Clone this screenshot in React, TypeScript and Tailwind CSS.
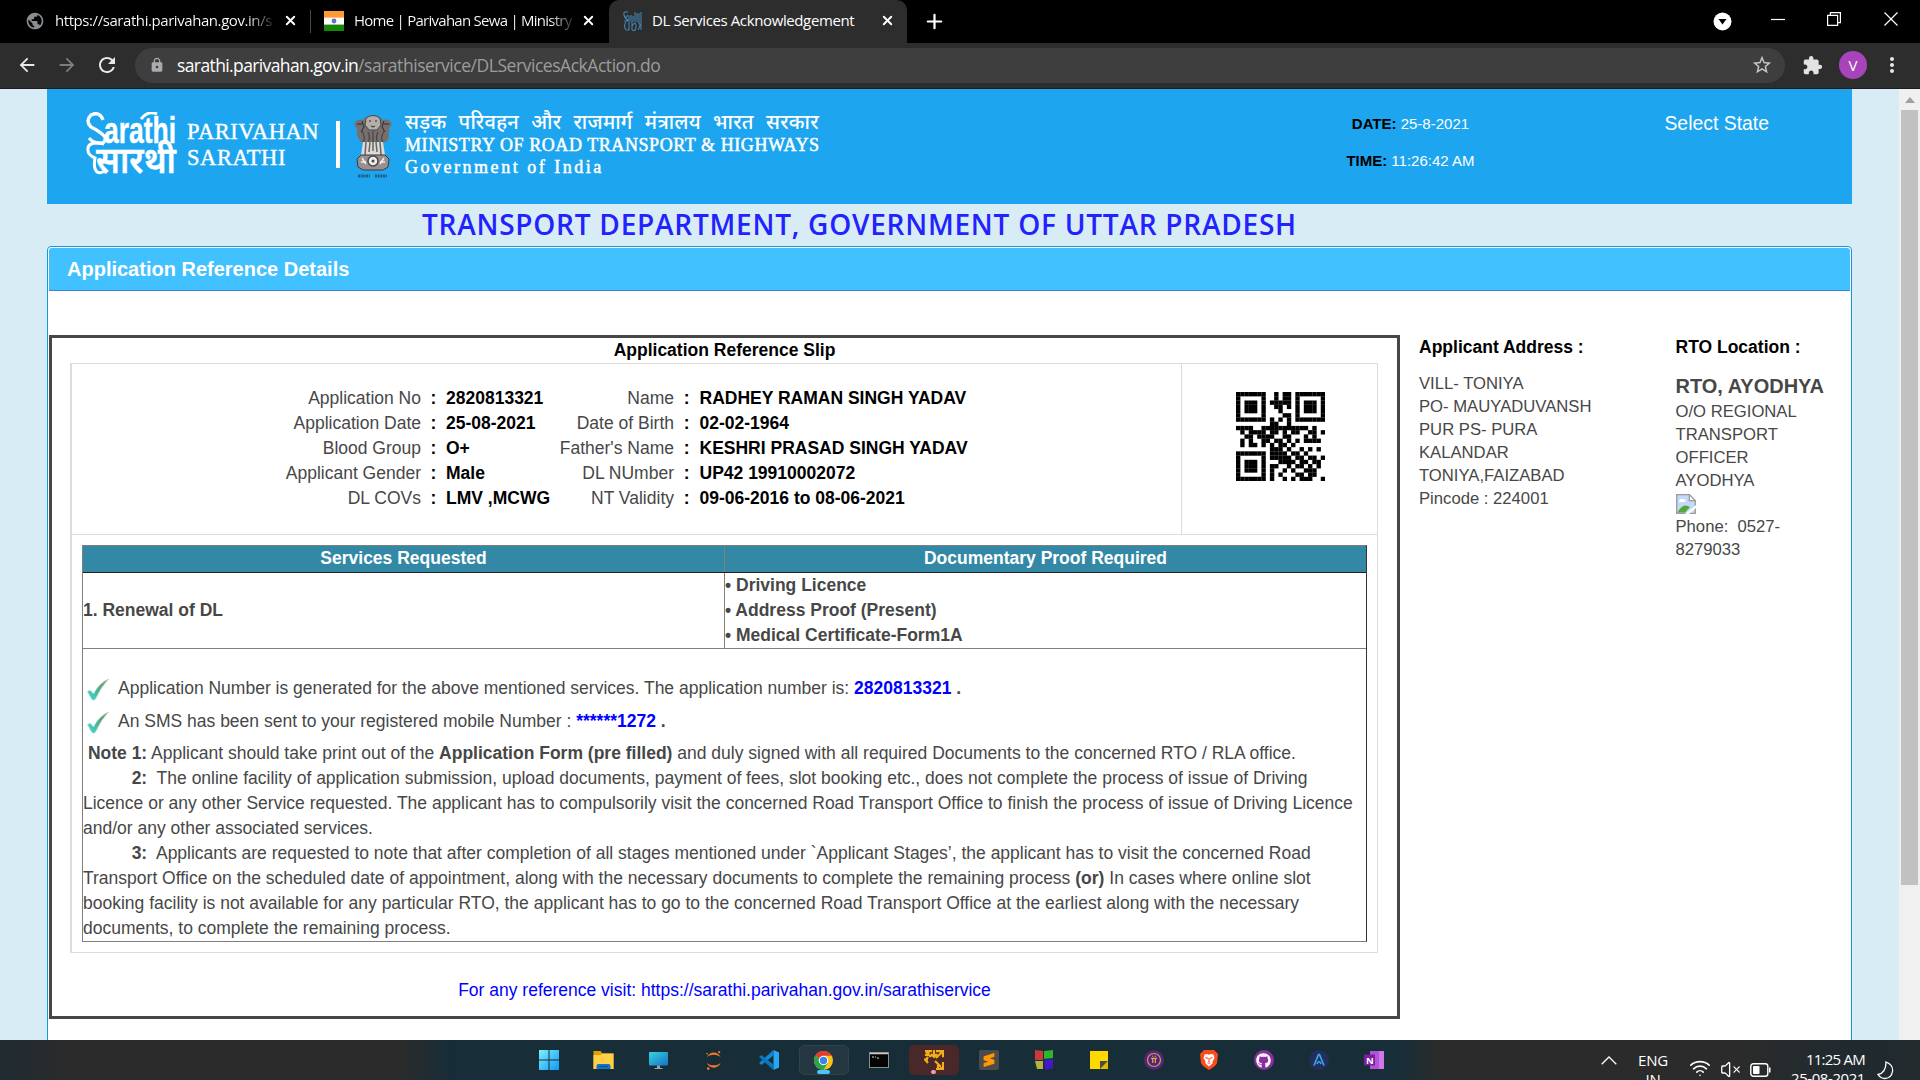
import React from "react";
import type { ReactNode } from "react";
import { Wifi, VolumeX, X, Plus } from "lucide-react";
import { MdExtension, MdStarBorder, MdLock, MdArrowBack, MdArrowForward, MdRefresh, MdPublic, MdMoreVert } from "react-icons/md";
import { SiJupyter, SiSublimetext } from "react-icons/si";
import { FaGithub } from "react-icons/fa";

const QR_ROWS = [
  "#######..#.##.#######",
  "#.....#..#.##.#.....#",
  "#.###.#.#####.#.###.#",
  "#.###.#..##.#.#.###.#",
  "#.###.#...#...#.###.#",
  "#.....#....##.#.....#",
  "#######.#.#.#.#######",
  "........##..#........",
  "####..###########.#..",
  ".#.####.##.#.##..##.#",
  "..##.####..##...#.#..",
  ".#.#..##.##.#.#.####.",
  ".#.##.#.#.##.#.......",
  "........###.#..#.#.#.",
  "#######.####.##.#....",
  "#.....#.#####.##.##.#",
  "#.###.#...####.##.##.",
  "#.###.#.##..#.##.#.#.",
  "#.###.#.#..#.#..###..",
  "#.....#.#.#...##.##..",
  "#######.#..#.#.###..#",
];

function QrCode() {
  return (
    <svg width="89" height="89" viewBox="0 0 21 21">
      {QR_ROWS.flatMap((row, y) =>
        row.split("").map((c, x) => (c === "#" ? <rect key={`${x}-${y}`} x={x} y={y} width="1.03" height="1.03" fill="#000" /> : null)),
      )}
    </svg>
  );
}

function TabStrip() {
  return (
    <div className="flex h-[43px] items-stretch bg-black text-[15px] text-white">
      <div className="flex w-[310px] items-center pb-[2px] pl-[25px]">
        <MdPublic className="size-[20px] shrink-0 text-[#8a8d91]" />
        <span className="ml-[10px] w-[219px] overflow-hidden whitespace-nowrap bg-gradient-to-r from-white from-88% to-[#222] bg-clip-text tracking-[-0.43px] text-transparent">https://sarathi.parivahan.gov.in/s</span>
        <X className="ml-[9px] size-[15px] shrink-0" strokeWidth={3} />
      </div>
      <div className="my-[10px] w-px bg-[#4a4a4a]" />
      <div className="flex w-[298px] items-center pb-[2px] pl-[13px]">
        <svg width="20" height="20" viewBox="0 0 20 20" className="shrink-0">
          <rect width="20" height="20" fill="#fff" />
          <rect width="20" height="6.6" fill="#ff9933" />
          <rect y="13.6" width="20" height="6.4" fill="#138808" />
          <circle cx="10" cy="10" r="2.4" fill="#6c6cc9" />
        </svg>
        <span className="ml-[10px] w-[218px] overflow-hidden whitespace-nowrap bg-gradient-to-r from-white from-90% to-[#333] bg-clip-text tracking-[-0.74px] text-transparent">Home | Parivahan Sewa | Ministry</span>
        <X className="ml-[9px] size-[15px] shrink-0" strokeWidth={3} />
      </div>
      <div className="flex w-[298px] items-center rounded-t-[10px] bg-[#2d2d2d] pb-[2px] pl-[14px]">
        <svg width="20" height="20" viewBox="0 0 20 20" className="shrink-0" fill="none" stroke="#4183b0" strokeWidth="1.100">
          <path d="M5 1Q0 0 1 4t4 5M6 9V5q-3-1-3 2t3 2M8 9V4M10 9V5M12 9V1M14 9V3h3M16 9V4M18 9V1M1 10h18M3 11q-3 4 0 8M6 11v8M3 19h3M9 11v8M9 15q4-6 4 0t-4 4M15 11q4 2 0 8M18 11v8" />
        </svg>
        <span className="ml-[9px] w-[221px] whitespace-nowrap tracking-[-0.38px]">DL Services Acknowledgement</span>
        <X className="ml-[7px] size-[15px] shrink-0" strokeWidth={3} />
      </div>
      <div className="flex flex-1 items-center pb-[1px] pl-[16px]">
        <Plus className="size-[23px]" strokeWidth={2.3} />
      </div>
      <div className="flex items-center pr-[22px]">
        <svg width="19" height="19" viewBox="0 0 19 19">
          <circle cx="9.500" cy="9.500" r="9" fill="#fff" />
          <path d="M5.500 7h8l-4 5.500z" fill="#000" />
        </svg>
        <svg width="14" height="14" viewBox="0 0 14 14" className="mb-[6px] ml-[39px]">
          <path d="M0 7.500h14" stroke="#fff" strokeWidth="1.200" />
        </svg>
        <svg width="14" height="14" viewBox="0 0 14 14" className="mb-[6px] ml-[42px]">
          <path d="M.6 3.400h10v10h-10zM3.400 3.400V.6h10v10h-2.800" stroke="#fff" strokeWidth="1.200" fill="none" />
        </svg>
        <svg width="14" height="14" viewBox="0 0 14 14" className="mb-[6px] ml-[43px]">
          <path d="M.5.500l13 13M13.500.500l-13 13" stroke="#fff" strokeWidth="1.200" />
        </svg>
      </div>
    </div>
  );
}

function Toolbar() {
  return (
    <div className="flex h-[46px] items-center border-b border-[#1c1c1c] bg-[#2d2d2d] pb-[1px]">
      <MdArrowBack className="ml-[16px] size-[22px] text-[#e8e8e8]" />
      <MdArrowForward className="ml-[18px] size-[22px] text-[#7d7d7d]" />
      <MdRefresh className="ml-[17px] size-[24px] text-[#e8e8e8]" />
      <div className="ml-[16px] flex h-[35px] w-[1650px] items-center rounded-full bg-[#3e3e3e] pl-[14px] pr-[12px]">
        <MdLock className="size-[16px] text-[#a9abb0]" />
        <span className="ml-[12px] flex-1 text-[17.5px] leading-[35px] tracking-[-0.46px] text-[#9c9c9c]">
          <span className="tracking-[-0.61px] text-white">sarathi.parivahan.gov.in</span>/sarathiservice/DLServicesAckAction.do
        </span>
        <MdStarBorder className="size-[22px] text-[#c8c8c8]" />
      </div>
      <MdExtension className="ml-[17px] size-[21px] text-[#e3e3e3]" />
      <span className="ml-[16px] flex size-[28px] items-center justify-center rounded-full bg-[#a844bb] text-[15px] text-white">V</span>
      <MdMoreVert className="ml-[13px] size-[24px] text-[#e8e8e8]" />
    </div>
  );
}

function Emblem() {
  return (
    <svg width="40" height="66" viewBox="0 0 40 66">
      <path d="M12 5q8-6 16 0l2 2q6-2 9 4l-3 5q1 10-3 13H8Q3 24 4 16l-3-5q3-6 9-4z" fill="#77706e" />
      <path d="M13 5q7-5 14 0l1 7-4 5h-8l-4-5z" fill="#b3adab" stroke="#4b4747" />
      <path d="M16 8h2M22 8h2M18 13q2 2 4 0M4 11h5M31 11h5M9 8l2 6-3 5M31 8l-2 6 3 5" stroke="#2d2a2a" fill="none" />
      <path d="M9 18q4 8 1 11M15 19q3 6 0 10M25 19q-3 6 0 10M31 18q-4 8-1 11M20 18v11" stroke="#4b4646" strokeWidth="1.300" fill="none" />
      <path d="M10 29h20l2 13H8z" fill="#dedada" />
      <path d="M13 29l-1 13M17 29l-1 10M23 29l1 10M27 29l1 13M20 29v9" stroke="#6a6464" strokeWidth="1.500" />
      <path d="M8 42h24l4 4-1 8-5 3H10l-5-3-1-8z" fill="#99908f" stroke="#3f3a3a" />
      <circle cx="20" cy="48" r="5" fill="#eee" stroke="#4b4747" strokeWidth="1.500" />
      <circle cx="20" cy="48" r="1.500" fill="#4b4747" />
      <path d="M8 49h5M27 49h5M9 45l4 6M31 45l-4 6" stroke="#eee" strokeWidth="1.500" />
      <path d="M5 63h12M22 63h12" stroke="#235d82" strokeWidth="3" strokeDasharray="2 .7" />
    </svg>
  );
}

function SiteHeader() {
  return (
    <header className="flex h-[115px] w-[1805px] bg-[#1da5f0] font-['Liberation_Sans',Arial,sans-serif] text-white">
      <div className="mt-[23px] ml-[39px] flex h-[66px] items-start">
        <svg width="94" height="66" viewBox="0 0 94 66" className="shrink-0" fontFamily="'Liberation Sans', 'Noto Sans', sans-serif" fill="#fff" stroke="#fff" strokeWidth=".4">
          <text x="18" y="31" fontSize="36" textLength="72" fontWeight="700" lengthAdjust="spacingAndGlyphs">arathi</text>
          <path d="M17 8Q14-1 5 3-1 9 5 15 15 20 19 25 20 32 13 31 7 31 3 26" stroke="#fff" strokeWidth="3.300" fill="none" />
          <path d="M55 7Q62-2 71 2" stroke="#fff" strokeWidth="3" fill="none" />
          <text x="10" y="61" fontSize="37" fontWeight="600" textLength="80" lengthAdjust="spacingAndGlyphs">सारथी</text>
          <path d="M18 32Q3 29 2 36T9 46 Q7 56 11 60 16 62 20 58" stroke="#fff" strokeWidth="3" fill="none" />
        </svg>
        <div className="ml-[7px] mt-[7px] flex w-[149px] flex-col font-['Liberation_Serif',serif] text-[22.5px] leading-[26px] [-webkit-text-stroke:0.4px_white]">
          <span className="tracking-[0.5px]">PARIVAHAN</span>
          <span className="tracking-[0.57px]">SARATHI</span>
        </div>
        <div className="mt-[9px] h-[47px] w-[4px] bg-white" />
        <div className="ml-[13px] mt-[1px]">
          <Emblem />
        </div>
        <div className="ml-[12px] flex flex-col whitespace-nowrap font-['Liberation_Serif',serif]">
          <span className="mt-[-3px] h-[25px] font-['Noto_Sans',sans-serif] text-[20px] font-medium leading-[25px] tracking-[0.3px] [word-spacing:6.6px]">सड़क परिवहन और राजमार्ग मंत्रालय भारत सरकार</span>
          <span className="text-[18px] leading-[22px] tracking-[0.570px] [-webkit-text-stroke:0.5px_white]">MINISTRY OF ROAD TRANSPORT &amp; HIGHWAYS</span>
          <span className="text-[18px] leading-[22px] tracking-[2.520px] [-webkit-text-stroke:0.5px_white]">Government of India</span>
        </div>
      </div>
      <div className="ml-auto mr-[1px] mt-[16px] flex w-[170px] flex-col items-center text-[15px]">
        <div className="h-[37px] leading-[37px] whitespace-nowrap"><b className="text-black">DATE:</b> 25-8-2021</div>
        <div className="h-[37px] leading-[37px] whitespace-nowrap"><b className="text-black">TIME:</b> 11:26:42 AM</div>
      </div>
      <div className="ml-[168px] mr-[83px] mt-[21px] whitespace-nowrap text-[19.400px] leading-[26px]">Select State</div>
    </header>
  );
}

const DETAILS: [string, string, string, string][] = [
  ["Application No", "2820813321", "Name", "RADHEY RAMAN SINGH YADAV"],
  ["Application Date", "25-08-2021", "Date of Birth", "02-02-1964"],
  ["Blood Group", "O+", "Father's Name", "KESHRI PRASAD SINGH YADAV"],
  ["Applicant Gender", "Male", "DL NUmber", "UP42 19910002072"],
  ["DL COVs", "LMV ,MCWG", "NT Validity", "09-06-2016 to 08-06-2021"],
];

function Details() {
  return (
    <div className="grid w-[1110px] grid-cols-[349px_25px_108px_120px_25.500px_1fr] content-start border-r border-[#dcdcdc] pt-[22px]">
      {DETAILS.map(([l1, v1, l2, v2]) => (
        <React.Fragment key={l1}>
          <span className="text-right">{l1}</span>
          <b className="text-center text-black">:</b>
          <b className="whitespace-nowrap text-black">{v1}</b>
          <span className="text-right">{l2}</span>
          <b className="text-center text-black">:</b>
          <b className="whitespace-nowrap text-black">{v2}</b>
        </React.Fragment>
      ))}
    </div>
  );
}

function CheckLine({ children }: { children: ReactNode }) {
  return (
    <div className="flex h-[33px] items-center pl-[3px]">
      <svg width="24" height="24" viewBox="0 0 24 24" className="mt-[2px]">
        <defs>
          <linearGradient id="tick" x1="0" y1="1" x2="1" y2="0">
            <stop offset="0" stopColor="#35dfe8" />
            <stop offset=".5" stopColor="#4cae90" />
            <stop offset="1" stopColor="#8a8a55" />
          </linearGradient>
        </defs>
        <path d="M1.500 13.500q2.500-2 4 0l2 2.500Q13 5 22.500 1 15 9 9.500 21q-2 2.500-4 0z" fill="url(#tick)" stroke="#b9dcc9" strokeWidth=".8" />
      </svg>
      <span className="ml-[8px] whitespace-nowrap">{children}</span>
    </div>
  );
}

function Slip() {
  return (
    <section className="h-[684px] w-[1351px] border-[3px] border-[#474747] text-[17.5px] leading-[25px]">
      <div className="h-[25px] text-center font-bold text-black">Application Reference Slip</div>
      <div className="ml-[18px] h-[590px] w-[1308px] border border-l-2 border-[#dcdcdc]">
        <div className="flex h-[171px] border-b border-[#dcdcdc]">
          <Details />
          <div className="flex flex-1 justify-center pt-[28px] pl-[1px]">
            <QrCode />
          </div>
        </div>
        <div className="ml-[10px] mt-[10px] w-[1285px] border border-[#808080] border-r-[#333]">
          <div className="grid h-[27px] grid-cols-[642px_1fr] border-b border-[#222] bg-[#3388a5] text-center font-bold text-white">
            <div className="border-r border-[#808080]">Services Requested</div>
            <div>Documentary Proof Required</div>
          </div>
          <div className="grid h-[76px] grid-cols-[642px_1fr] border-b border-[#808080] font-bold">
            <div className="flex items-center border-r border-[#808080]">1. Renewal of DL</div>
            <div>
              <div>• Driving Licence</div>
              <div>• Address Proof (Present)</div>
              <div>• Medical Certificate-Form1A</div>
            </div>
          </div>
          <div className="h-[292px] whitespace-nowrap pt-[23px]">
            <CheckLine>Application Number is generated for the above mentioned services. The application number is: <b><span className="text-[#0000ff]">2820813321</span> .</b></CheckLine>
            <CheckLine>An SMS has been sent to your registered mobile Number : <b><span className="text-[#0000ff]">******1272</span> .</b></CheckLine>
            <p className="mt-[3px]">{"\u00a0"}<b>Note 1:</b> Applicant should take print out of the <b>Application Form (pre filled)</b> and duly signed with all required Documents to the concerned RTO / RLA office.</p>
            <p>
              {"\u00a0".repeat(10)}<b>2:</b>{"\u00a0 "}The online facility of application submission, upload documents, payment of fees, slot booking etc., does not complete the process of issue of Driving<br />
              Licence or any other Service requested. The applicant has to compulsorily visit the concerned Road Transport Office to finish the process of issue of Driving Licence<br />
              and/or any other associated services.
            </p>
            <p>
              {"\u00a0".repeat(10)}<b>3:</b>{"\u00a0 "}Applicants are requested to note that after completion of all stages mentioned under `Applicant Stages’, the applicant has to visit the concerned Road<br />
              Transport Office on the scheduled date of appointment, along with the necessary documents to complete the remaining process <b>(or)</b> In cases where online slot<br />
              booking facility is not available for any particular RTO, the applicant has to go to the concerned Road Transport Office at the earliest along with the necessary<br />
              documents, to complete the remaining process.
            </p>
          </div>
        </div>
      </div>
      <div className="mt-[25px] text-center text-[#0000ff]">For any reference visit: https://sarathi.parivahan.gov.in/sarathiservice</div>
    </section>
  );
}

function BrokenImage() {
  return (
    <svg width="20" height="20" viewBox="0 0 20 20" className="mb-[1px] mt-[2px] block">
      <path d="M.7.7h12.600l6 6v12.600H.7z" fill="#c3d9f7" stroke="#9b9b9b" strokeWidth="1.300" />
      <path d="M13.300.7v6h6z" fill="#fff" stroke="#9b9b9b" strokeWidth="1.200" />
      <path d="M3 7q1-3 4-2 3 0 2.500 3H3z" fill="#fff" />
      <path d="M1.500 18.500Q7 8 14 13l-5 5.500z" fill="#52a83a" />
      <path d="M9 20L20 11v3l-7 6z" fill="#fff" />
    </svg>
  );
}

function SideInfo() {
  return (
    <aside className="flex text-[16.67px] leading-[23px]">
      <div className="ml-[19px] w-[256.5px]">
        <h3 className="mt-px text-[17.5px] font-bold leading-[23px] text-black">Applicant Address :</h3>
        <div className="mt-[13px]">
          VILL- TONIYA<br />PO- MAUYADUVANSH<br />PUR PS- PURA<br />KALANDAR<br />TONIYA,FAIZABAD<br />Pincode : 224001
        </div>
      </div>
      <div className="whitespace-nowrap">
        <h3 className="mt-px text-[17.5px] font-bold leading-[23px] text-black">RTO Location :</h3>
        <div className="mt-[13px] text-[20px] font-bold leading-[28px]">RTO, AYODHYA</div>
        <div>O/O REGIONAL<br />TRANSPORT<br />OFFICER<br />AYODHYA</div>
        <BrokenImage />
        <div>Phone:&nbsp; 0527-<br />8279033</div>
      </div>
    </aside>
  );
}

function Page() {
  return (
    <div className="flex h-[951px] overflow-hidden bg-[#d8ecf5]">
      <div className="w-[1899px] pl-[47px] font-['Liberation_Sans',Arial,sans-serif]">
        <SiteHeader />
        <h1 className="h-[42px] pl-[375px] whitespace-nowrap font-['Open_Sans',sans-serif] text-[28px] font-semibold leading-[41px] tracking-[0.76px] text-[#2222ff]">TRANSPORT DEPARTMENT, GOVERNMENT OF UTTAR PRADESH</h1>
        <div className="h-[900px] w-[1805px] rounded-t-[4px] border border-[#0f9bd3] bg-white p-[1px] text-[#474747]">
          <div className="h-[43px] rounded-t-[3px] border-b border-[#3a86c8] bg-[#41c1ff] pl-[18px] text-[20px] font-bold leading-[42px] text-white">Application Reference Details</div>
          <div className="mt-[44px] flex">
            <Slip />
            <SideInfo />
          </div>
        </div>
      </div>
      <div className="flex w-[21px] flex-col items-center bg-[#f0f0f0]">
        <div className="flex h-[21px] items-center">
          <svg width="10" height="6" viewBox="0 0 10 6"><path d="M0 6L5 0l5 6z" fill="#a0a0a0" /></svg>
        </div>
        <div className="h-[775px] w-[17px] bg-[#c1c1c1]" />
      </div>
    </div>
  );
}

function WindowsIcon() {
  return (
    <svg width="20" height="20" viewBox="0 0 20 20">
      <defs><linearGradient id="win" gradientUnits="userSpaceOnUse" x1="0" y1="0" x2="20" y2="20"><stop stopColor="#7cf0ff" /><stop offset="1" stopColor="#1296f5" /></linearGradient></defs>
      <path d="M0 0h9.500v9.500H0zM10.500 0H20v9.500h-9.500zM0 10.500h9.500V20H0zM10.500 10.500H20V20h-9.500z" fill="url(#win)" />
    </svg>
  );
}

function FolderIcon() {
  return (
    <svg width="21" height="18" viewBox="0 0 20 18">
      <path d="M0 0h7l2 2.500h11V18H0z" fill="#e3a100" />
      <path d="M0 4h7l2-1.500h11V18H0z" fill="#ffcf48" />
      <path d="M3 18v-3q0-2 2-2h10q2 0 2 2v3z" fill="#1173c8" />
      <path d="M6 15.500h8" stroke="#0a4a8a" />
    </svg>
  );
}

function MonitorIcon() {
  return (
    <svg width="19" height="17" viewBox="0 0 19 17">
      <defs><linearGradient id="mon" x1="0" y1="0" x2="1" y2="1"><stop stopColor="#35d3e0" /><stop offset="1" stopColor="#1672c6" /></linearGradient></defs>
      <rect width="19" height="13.500" rx=".8" fill="url(#mon)" />
      <path d="M8 13.500h3V16h2.500v1h-8v-1H8z" fill="#9aa4aa" />
    </svg>
  );
}

function CodeIcon() {
  return (
    <svg width="20" height="20" viewBox="0 0 20 20">
      <path d="M14.500 0L20 2.500v15L14.500 20z" fill="#2aa7f2" />
      <path d="M14.500 0v5.500L2.500 15 0 13z" fill="#1287d1" />
      <path d="M14.500 20v-5.500L2.500 5 0 7z" fill="#0a76bf" />
    </svg>
  );
}

function ChromeIcon() {
  return (
    <svg width="19" height="19" viewBox="0 0 20 20">
      <circle cx="10" cy="10" r="10" fill="#fbc116" />
      <path d="M10 10L1.340 5A10 10 0 0 1 18.660 5z" fill="#e33b2e" />
      <path d="M10 10L1.340 5A10 10 0 0 0 10 20l4.330-7.500z" fill="#2ba24c" />
      <path d="M10 5h8.660L14.330 12.500z" fill="#fbc116" />
      <circle cx="10" cy="10" r="5" fill="#fff" />
      <circle cx="10" cy="10" r="3.900" fill="#3b82ee" />
    </svg>
  );
}

function TerminalIcon() {
  return (
    <svg width="20" height="16" viewBox="0 0 20 16">
      <rect x=".5" y=".5" width="19" height="15" fill="#050505" stroke="#8b8b8b" />
      <path d="M1 1.500h18" stroke="#c8c8c8" strokeWidth="1.500" />
      <path d="M3 5h2M6 5h1M8 6h2" stroke="#ddd" />
    </svg>
  );
}

function ArrowsIcon() {
  return (
    <svg width="20" height="20" viewBox="0 0 20 20" fill="none" stroke="#f2ae12" strokeWidth="2.200">
      <path d="M1 1.200h7M12 1.200h7v6M2 2l5 5M18 2l-6 6M1 5h3.500V1.500M10 0v5M7 4l3 3 3-3M0 9.500h4M4 7l-2.500 3L4 13M11 11l7 7M19 12v7h-7M14 19v-4" />
    </svg>
  );
}

function BlocksIcon() {
  return (
    <svg width="20" height="20" viewBox="0 0 20 20">
      <path d="M1 0l8 1v9H1z" fill="#c93a3a" /><path d="M10 1l9-1v8l-9 1z" fill="#2fb42a" />
      <path d="M1 11h8v8H3z" fill="#b5b33a" /><path d="M10 10l9-1v9l-8 2z" fill="#4318c9" />
    </svg>
  );
}

function NoteIcon() {
  return (
    <svg width="18" height="18" viewBox="0 0 18 18">
      <path d="M0 0h18v10l-8 8H0z" fill="#ffd800" /><path d="M18 10l-8 8v-8z" fill="#4a4a4a" /><path d="M18 10v8h-8z" fill="#dfb800" />
    </svg>
  );
}

function PiIcon() {
  return (
    <svg width="20" height="20" viewBox="0 0 20 20" fill="none">
      <circle cx="10" cy="10" r="10" fill="#50277a" />
      <circle cx="10" cy="10" r="6.500" stroke="#d99b4a" strokeWidth="1.200" />
      <path d="M7 8.300h6M8.700 8.500V13M11.300 8.500V13M8.700 5.800v1M11.300 5.800v1" stroke="#e5a550" strokeWidth="1.200" />
    </svg>
  );
}

function LionIcon() {
  return (
    <svg width="18" height="20" viewBox="0 0 18 20">
      <path d="M4 0h10l4 4-1 9q-1 3-8 7-7-4-8-7L0 4z" fill="#fb4a1b" />
      <path d="M4.500 4.500L7 4l2 .8 2-.8 2.500.5 1 3.500-2 3.500v2L9 16.500l-3.500-3v-2l-2-3.500z" fill="#fff" />
      <path d="M5.500 7.500l2.500 1M12.500 7.500l-2.500 1M9 8v4M7.500 13h3" stroke="#fb4a1b" strokeWidth="1.100" />
    </svg>
  );
}

function PeakIcon() {
  return (
    <svg width="20" height="20" viewBox="0 0 20 20" fill="none">
      <circle cx="10" cy="10" r="10" fill="#232e5c" />
      <path d="M5 15.500L9.500 4.500h1L15 15.500M8 14q2-5 4 0" stroke="#36a7e8" strokeWidth="1.700" />
    </svg>
  );
}

function NotebookIcon() {
  return (
    <svg width="20" height="20" viewBox="0 0 20 20">
      <path d="M6 1h14v18H6z" fill="#b452d8" /><path d="M15 1h5v18h-5z" fill="#cf78ee" />
      <rect y="4.500" width="11" height="11" fill="#7b1fa2" />
      <text x="2" y="13.500" fontSize="9.500" fontWeight="700" fontFamily="Open Sans, sans-serif" fill="#fff">N</text>
    </svg>
  );
}

const APPS: ReactNode[] = [
  <WindowsIcon />, <FolderIcon />, <MonitorIcon />,
  <SiJupyter className="size-[19px] text-[#f37726]" />,
  <CodeIcon />, <ChromeIcon />, <TerminalIcon />, <ArrowsIcon />,
  <span className="flex size-[20px] items-center justify-center rounded-[2px] bg-[#4b4b4b]"><SiSublimetext className="size-[14px] text-[#ff9800]" /></span>,
  <BlocksIcon />, <NoteIcon />, <PiIcon />, <LionIcon />,
  <span className="flex size-[20px] items-center justify-center rounded-full bg-[#8b2fa0]"><FaGithub className="size-[15px] text-white" /></span>,
  <PeakIcon />, <NotebookIcon />,
];

function Taskbar() {
  return (
    <div className="flex h-[40px] overflow-hidden bg-[linear-gradient(90deg,#1f2b30_0px,#2b2b2b_70px,#2b2b2b_400px,#172d37_450px,#172d37_1400px,#2b2b2b_1440px,#2b2b2b_1740px,#1f2a2f_1860px,#232a2d_1920px)] text-white">
      <div className="ml-[521px] flex h-[40px] items-center">
        {APPS.map((icon, i) => (
          <div key={i} className="flex w-[55px] justify-center">
            {i === 5 ? (
              <div className="relative flex h-[30px] w-[50px] items-center justify-center rounded-[5px] border border-[#30424b] bg-[#24363f]">
                {icon}
                <span className="absolute bottom-0 h-[4px] w-[13px] rounded-full bg-[#4cc2ff]" />
              </div>
            ) : i === 7 ? (
              <div className="relative flex h-[30px] w-[50px] items-center justify-center rounded-[5px] bg-[#4a2829]">
                {icon}
                <span className="absolute bottom-[1px] h-[4px] w-[5px] rounded-full bg-[#ff99a4]" />
              </div>
            ) : (
              icon
            )}
          </div>
        ))}
      </div>
      <div className="ml-auto flex text-[15px] leading-[19px]">
        <svg width="16" height="9" viewBox="0 0 16 9" className="mt-[16px]"><path d="M.7 8.300L8 1l7.300 7.300" stroke="#fff" strokeWidth="1.300" fill="none" /></svg>
        <div className="ml-[21px] mt-[11px] flex w-[30px] flex-col items-center tracking-[-0.2px]"><span>ENG</span><span>IN</span></div>
        <Wifi className="ml-[21px] mt-[17px] size-[22px]" strokeWidth={1.800} />
        <VolumeX className="ml-[9px] mt-[19px] size-[21px]" strokeWidth={1.500} />
        <svg width="21" height="14" viewBox="0 0 21 14" className="ml-[9px] mt-[23px]">
          <rect x=".8" y=".8" width="17" height="12.400" rx="2.500" fill="none" stroke="#fff" strokeWidth="1.400" />
          <rect x="3" y="3" width="6.500" height="8" rx=".8" fill="#fff" /><path d="M19 4.500h1.500v5H19z" fill="#fff" />
        </svg>
        <div className="ml-[10px] mt-[10px] flex w-[84px] flex-col items-end whitespace-nowrap"><span className="tracking-[-0.76px]">11:25 AM</span><span className="tracking-[-0.43px]">25-08-2021</span></div>
        <svg width="17" height="19" viewBox="0 0 17 19" className="ml-[12px] mr-[26px] mt-[21px]"><path d="M9 1q7.500 3 6.500 9.500T8 17.500Q3.500 17.500 1 13.500 9 12 9 1z" stroke="#fff" strokeWidth="1.300" fill="none" /></svg>
      </div>
    </div>
  );
}

export default function App() {
  return (
    <div className="h-[1080px] w-[1920px] overflow-hidden font-['Open_Sans',sans-serif]">
      <TabStrip />
      <Toolbar />
      <Page />
      <Taskbar />
    </div>
  );
}
